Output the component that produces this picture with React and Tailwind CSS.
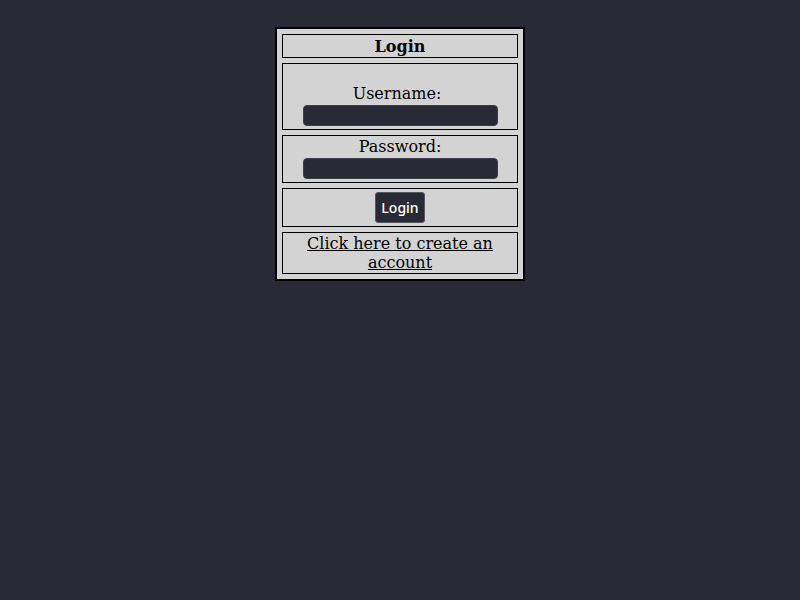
import React from 'react';

const serif = { fontFamily: '"DejaVu Serif", serif' };

const Field = ({ label, top }) => (
  <div className={`border border-black flex flex-col items-center ${top ? 'h-[67px] pt-[20px]' : 'h-[48px] pt-[1px]'}`}>
    <span className={`text-[16px] leading-[20px] text-black ${top ? 'pr-[6px]' : ''}`}>{label}</span>
    <input
      className="mt-[1px] w-[195px] h-[21px] rounded-[4px] bg-[#282a36] border border-[#3c3e4a] outline-none"
      type={label === 'Password:' ? 'password' : 'text'}
    />
  </div>
);

export default function App() {
  return (
    <div className="min-h-screen bg-[#282a36] pt-[27px]" style={serif}>
      <div className="w-[250px] mx-auto border-2 border-black bg-[#d3d3d3] p-[5px] flex flex-col gap-[5px]">
        <div className="border border-black h-[24px] flex items-center justify-center pt-[2px]">
          <span className="text-[16px] font-bold leading-[20px]">Login</span>
        </div>
        <Field label="Username:" top />
        <Field label="Password:" />
        <div className="border border-black h-[39px] flex items-center justify-center">
          <button
            className="h-[31px] px-[5px] rounded-[3px] bg-[#282a36] border border-[#55575f] text-white text-[14px] font-medium"
            style={{ fontFamily: '"Noto Sans", sans-serif' }}
          >
            Login
          </button>
        </div>
        <div className="border border-black h-[42px] flex items-center justify-center text-center px-[4px]">
          <a href="#" className="underline text-[16px] leading-[19px] text-black">
            Click here to create an account
          </a>
        </div>
      </div>
    </div>
  );
}
